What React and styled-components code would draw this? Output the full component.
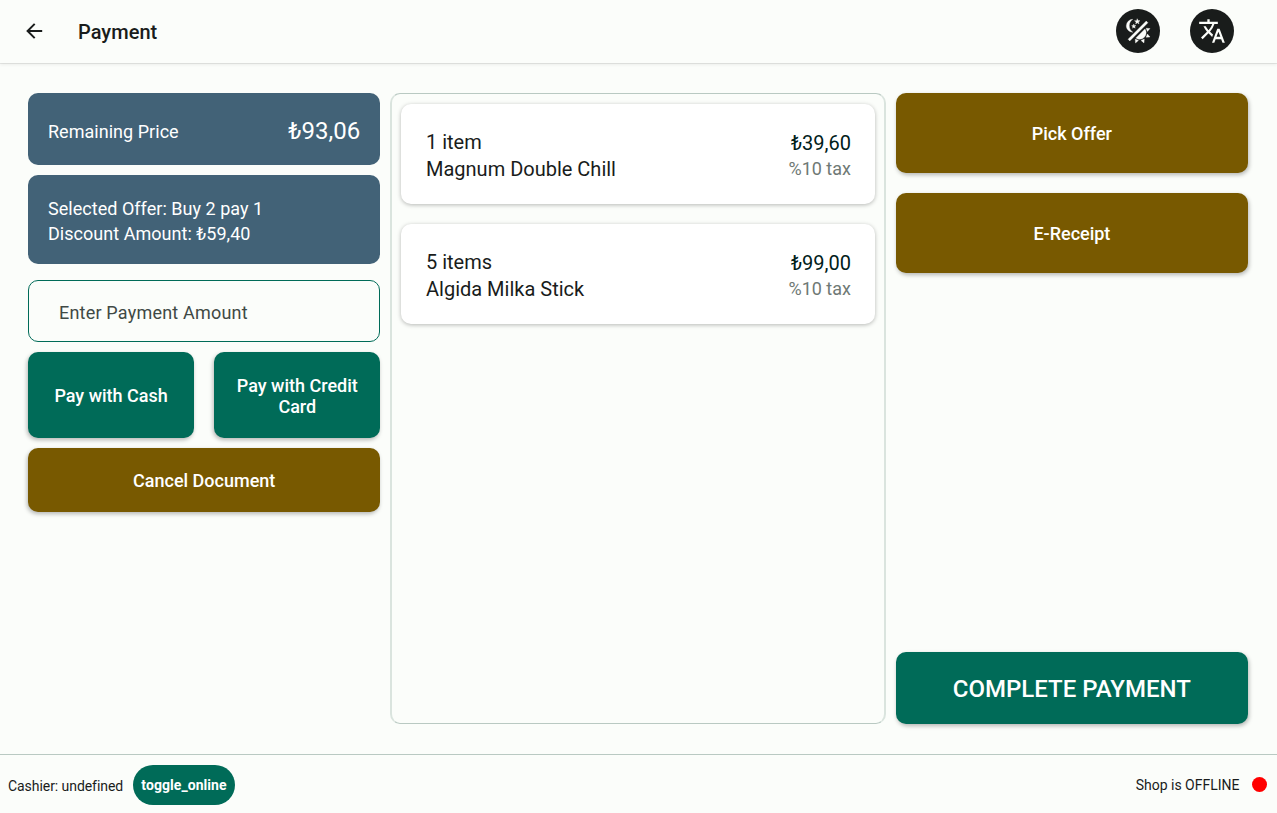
import React from 'react';
import styled, { createGlobalStyle } from 'styled-components';
import { MdTranslate } from 'react-icons/md';

const c = {
  bg: '#fbfdfa', ink: '#191c1b', green: '#006b58', brown: '#785900',
  slate: '#426277', outline: '#b9c9c2', softOutline: '#dae4de', muted: '#3f4945',
};

const Global = createGlobalStyle`
  * { box-sizing: border-box; }
  body { margin: 0; background: ${c.bg}; color: ${c.ink}; font-family: Roboto, "Liberation Sans", sans-serif; }
  button { font: inherit; border: 0; margin: 0; padding: 0; cursor: pointer; }
`;

const Screen = styled.div`
  display: flex;
  flex-direction: column;
  height: 813px;
  overflow: hidden;
`;

const Header = styled.header`
  display: flex;
  align-items: center;
  height: 63px;
  flex: none;
  padding: 0 43px 1px 22px;
  box-shadow: 0 1px 0 rgba(0, 0, 0, 0.08), 0 2px 3px rgba(0, 0, 0, 0.06);
`;

const BackButton = styled.button`
  display: flex;
  width: 24px;
  height: 24px;
  background: none;
  color: ${c.ink};
`;

const Title = styled.h1`
  flex: 1;
  margin: 2px 0 0 32px;
  font-size: 20px;
  line-height: 24px;
  font-weight: 500;
  letter-spacing: 0.04px;
`;

const RoundButton = styled.button`
  display: flex;
  align-items: center;
  justify-content: center;
  width: 44px;
  height: 44px;
  margin-left: 30px;
  border-radius: 50%;
  background: ${c.ink};
  color: ${c.bg};
`;

const Main = styled.main`
  flex: 1;
  display: grid;
  grid-template-columns: 352.4px 496px 352.6px;
  column-gap: 9.6px;
  padding: 30px 28px;
`;

const Column = styled.section`
  display: flex;
  flex-direction: column;
`;

const InfoCard = styled.div`
  display: flex;
  flex-direction: ${(p) => (p.$stack ? 'column' : 'row')};
  align-items: ${(p) => (p.$stack ? 'flex-start' : 'center')};
  justify-content: ${(p) => (p.$stack ? 'center' : 'space-between')};
  height: ${(p) => p.$height}px;
  margin-bottom: ${(p) => p.$gap}px;
  padding: ${(p) => (p.$stack ? 3 : 4)}px 20px 0;
  border-radius: 10px;
  background: ${c.slate};
  color: #fff;
  font-size: 18px;
  line-height: 25px;
  letter-spacing: 0.03px;
`;

const BigPrice = styled.span`
  font-size: 24px;
`;

const AmountInput = styled.input`
  width: 100%;
  height: 62px;
  margin-bottom: 10px;
  padding: 3px 30px 0;
  border: 1px solid ${c.green};
  border-radius: 10px;
  background: ${c.bg};
  outline: 0;
  font: 18px Roboto, sans-serif;
  letter-spacing: 0.2px;
  &::placeholder { color: ${c.muted}; opacity: 1; }
`;

const PayRow = styled.div`
  display: grid;
  grid-template-columns: 1fr 1fr;
  gap: 20px;
  height: 85.6px;
  margin-bottom: 10px;
`;

const ActionButton = styled.button`
  height: ${(p) => p.$height}px;
  padding: ${(p) => (p.$large ? 3 : 1)}px 16px 0;
  border-radius: 10px;
  background: ${(p) => (p.$tone === 'brown' ? c.brown : c.green)};
  color: #fff;
  font-size: ${(p) => (p.$large ? 24 : 18)}px;
  font-weight: 500;
  line-height: 21px;
  box-shadow: ${(p) => p.$shift || 0}px 2px 4px rgba(0, 0, 0, 0.28);
`;

const Offers = styled.div`
  flex: 1;
  display: flex;
  flex-direction: column;
  gap: 20px;
`;

const ItemPanel = styled.section`
  display: flex;
  flex-direction: column;
  gap: 20px;
  padding: 10px 9px;
  border: solid ${c.outline};
  border-width: 1px 2px;
  border-left-color: ${c.softOutline};
  border-right-color: ${c.softOutline};
  border-radius: 10px;
`;

const ItemCard = styled.article`
  display: flex;
  justify-content: space-between;
  align-items: center;
  height: 100px;
  padding: 0 24px 0 25px;
  border-radius: 10px;
  background: #fff;
  box-shadow: 0 1px 4px rgba(0, 0, 0, 0.28);
`;

const ItemText = styled.div`
  padding-top: 3px;
  font-size: 20px;
  line-height: 27px;
`;

const PriceText = styled.div`
  padding-top: 4px;
  text-align: right;
  font-size: 20px;
  line-height: 26px;
  color: #00201a;
`;

const Tax = styled.div`
  font-size: 18px;
  color: #6f7975;
`;

const Footer = styled.footer`
  display: flex;
  align-items: center;
  flex: none;
  height: 59px;
  padding: 1px 10.5px 0 8px;
  border-top: 1px solid ${c.outline};
  font-size: 14px;
`;

const Cashier = styled.span`
  width: 115px;
  padding-top: 2px;
  white-space: nowrap;
  letter-spacing: -0.06px;
`;

const ToggleButton = styled.button`
  width: 102px;
  height: 40px;
  margin-left: 10px;
  padding: 1px 0 0;
  border-radius: 20px;
  background: ${c.green};
  color: #fff;
  font-weight: 700;
  letter-spacing: 0.06px;
`;

const Status = styled.span`
  margin: 0 12px 0 auto;
  padding-top: 1px;
`;

const Dot = styled.span`
  width: 15px;
  height: 15px;
  border-radius: 50%;
  background: #f00;
`;

const items = [
  { count: '1 item', name: 'Magnum Double Chill', price: '₺39,60', tax: '%10 tax' },
  { count: '5 items', name: 'Algida Milka Stick', price: '₺99,00', tax: '%10 tax' },
];

const ArrowIcon = () => (
  <svg width="24" height="24" viewBox="0 0 24 24" fill="none" stroke="currentColor" strokeWidth="2">
    <path d="M20.2 12H5.8M12.7 4.9 5.6 12l7.1 7.1" />
  </svg>
);

const ThemeIcon = () => (
  <svg width="28" height="28" viewBox="0 0 24 24" fill="currentColor" stroke="currentColor" strokeWidth="0.3" strokeLinejoin="round">
    <path d="M7.5,2C5.71,3.15 4.5,5.18 4.5,7.5C4.5,9.82 5.71,11.85 7.53,13C4.46,13 2,10.54 2,7.5A5.5,5.5 0 0,1 7.5,2M19.07,3.5L20.5,4.93L4.93,20.5L3.5,19.07L19.07,3.5M12.89,5.93L11.41,5L9.97,6L10.39,4.3L9,3.24L10.75,3.12L11.33,1.47L12,3.1L13.73,3.13L12.38,4.26L12.89,5.93M9.59,9.54L8.43,8.81L7.31,9.59L7.65,8.27L6.56,7.44L7.92,7.35L8.37,6.06L8.88,7.33L10.24,7.36L9.19,8.23L9.59,9.54M19,13.5A5.5,5.5 0 0,1 13.5,19C12.28,19 11.15,18.6 10.24,17.93L17.93,10.24C18.6,11.15 19,12.28 19,13.5M14.6,20.08L17.37,18.93L17.13,22.28L14.6,20.08M18.93,17.38L20.08,14.61L22.28,17.15L18.93,17.38M20.08,12.42L18.94,9.64L22.28,9.88L20.08,12.42M9.63,18.93L12.4,20.08L9.87,22.27L9.63,18.93Z" />
  </svg>
);

export default function App() {
  return (
    <Screen>
      <Global />
      <Header>
        <BackButton aria-label="Back"><ArrowIcon /></BackButton>
        <Title>Payment</Title>
        <RoundButton aria-label="Theme"><ThemeIcon /></RoundButton>
        <RoundButton aria-label="Language"><MdTranslate size={28} /></RoundButton>
      </Header>
      <Main>
        <Column>
          <InfoCard $height={72.4} $gap={10}>
            <span>Remaining Price</span>
            <BigPrice>₺93,06</BigPrice>
          </InfoCard>
          <InfoCard $stack $height={89} $gap={16}>
            <span>Selected Offer: Buy 2 pay 1</span>
            <span>Discount Amount: ₺59,40</span>
          </InfoCard>
          <AmountInput placeholder="Enter Payment Amount" />
          <PayRow>
            <ActionButton $shift={-1}>Pay with Cash</ActionButton>
            <ActionButton $shift={-1}>Pay with Credit Card</ActionButton>
          </PayRow>
          <ActionButton $tone="brown" $height={64.5} $shift={-1}>Cancel Document</ActionButton>
        </Column>
        <ItemPanel>
          {items.map((item) => (
            <ItemCard key={item.name}>
              <ItemText>
                <div>{item.count}</div>
                <div>{item.name}</div>
              </ItemText>
              <PriceText>
                <div>{item.price}</div>
                <Tax>{item.tax}</Tax>
              </PriceText>
            </ItemCard>
          ))}
        </ItemPanel>
        <Column>
          <Offers>
            <ActionButton $tone="brown" $height={80} $shift={1}>Pick Offer</ActionButton>
            <ActionButton $tone="brown" $height={80} $shift={1}>E-Receipt</ActionButton>
          </Offers>
          <ActionButton $large $height={72.4} $shift={1}>COMPLETE PAYMENT</ActionButton>
        </Column>
      </Main>
      <Footer>
        <Cashier>Cashier: undefined</Cashier>
        <ToggleButton>toggle_online</ToggleButton>
        <Status>Shop is OFFLINE</Status>
        <Dot />
      </Footer>
    </Screen>
  );
}
